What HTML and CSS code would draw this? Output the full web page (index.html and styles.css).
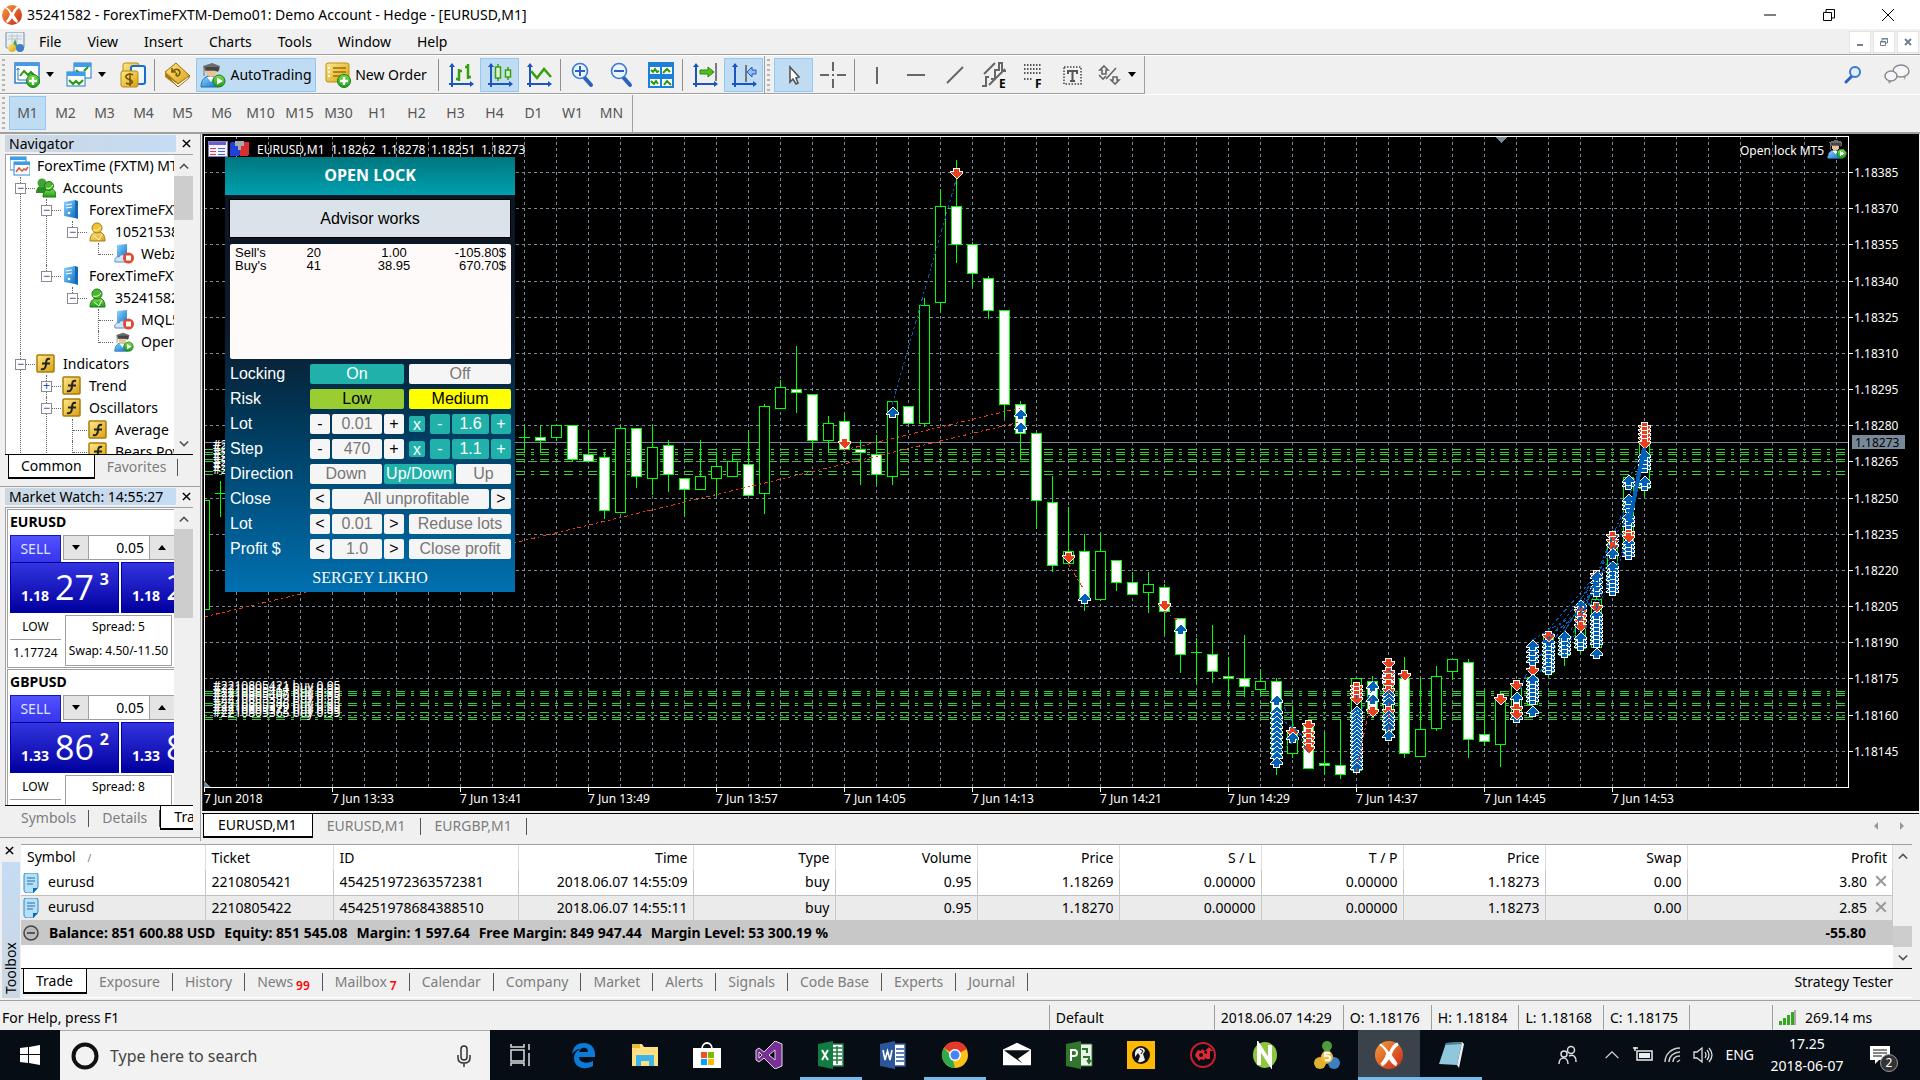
FILE: index.html
```
<!DOCTYPE html>
<html lang="en">
<head>
    <meta charset="utf-8">
    <title>35241582 - ForexTimeFXTM-Demo01: Demo Account - Hedge - [EURUSD,M1]</title>
    <link rel="stylesheet" href="styles.css">
</head>
<body>
    <!-- shared icons -->
    <svg class="defs" aria-hidden="true">
        <defs>
            <linearGradient id="gold" x1="0" y1="0" x2="1" y2="1"><stop offset="0" stop-color="#ffe98a"/><stop offset="1" stop-color="#d9a010"/></linearGradient>
            <linearGradient id="blue" x1="0" y1="0" x2="1" y2="1"><stop offset="0" stop-color="#8fd6ff"/><stop offset="1" stop-color="#1272c4"/></linearGradient>
            <linearGradient id="green" x1="0" y1="0" x2="0" y2="1"><stop offset="0" stop-color="#7ede4a"/><stop offset="1" stop-color="#1f9a1c"/></linearGradient>
            <linearGradient id="ball" x1="0" y1="0" x2="1" y2="1"><stop offset="0" stop-color="#f6a03a"/><stop offset="1" stop-color="#c8261a"/></linearGradient>
        </defs>
        <symbol id="i-x" viewBox="0 0 20 20"><circle cx="10" cy="10" r="10" fill="url(#ball)"/><path d="M4 2c2 1 4 3 6 6 2-4 3-6 6-7l1 2c-3 2-4 4-5 7 2 3 3 4 4 6l-1 2c-2-1-4-3-5-5-2 3-3 4-5 5l-1-2c2-2 3-4 4-7-1-3-3-5-5-6z" fill="#fff"/></symbol>
        <symbol id="i-terminal" viewBox="0 0 20 20"><rect x="1" y="0" width="18" height="16" rx="1" fill="#e8f0f4" stroke="#6f8ea0"/><path d="M3 4h14M3 7h14M7 2v9M12 2v9" stroke="#b9c6cc"/><path d="M6 18l4-11 3 8z" fill="#4a9a4a"/><circle cx="7" cy="16" r="4" fill="url(#gold)"/><circle cx="15" cy="16" r="4" fill="#3d7fc0"/></symbol>
        <symbol id="i-chart-new" viewBox="0 0 26 26"><rect x="1" y="1" width="24" height="20" fill="#fff" stroke="#2176c7" stroke-width="1.4"/><rect x="1" y="1" width="24" height="3" fill="#3c9de8"/><path d="M4 6v12h17M2.500 8l1.500-2 1.500 2" stroke="#2176c7" fill="none"/><path d="M6 14l4-5 4 4 3-3 4 4" stroke="#279a13" stroke-width="2" fill="none"/><circle cx="19" cy="19" r="6.500" fill="url(#green)" stroke="#178016"/><path d="M19 15v8M15 19h8" stroke="#fff" stroke-width="2.400"/></symbol>
        <symbol id="i-windows" viewBox="0 0 26 26"><rect x="8" y="1" width="17" height="15" fill="#fff" stroke="#2176c7"/><rect x="8" y="1" width="17" height="4" fill="#3c9de8"/><path d="M18 9l4-4M10 8l4 4" stroke="#279a13" stroke-width="2"/><rect x="1" y="10" width="18" height="14" fill="#fff" stroke="#2176c7"/><rect x="1" y="10" width="18" height="4" fill="#3c9de8"/><path d="M3 18l4 4 3-3 3 3 4-4" stroke="#279a13" stroke-width="2" fill="none"/></symbol>
        <symbol id="i-money" viewBox="0 0 26 26"><rect x="3" y="1" width="16" height="18" rx="2" fill="url(#gold)" stroke="#b98a12"/><rect x="11" y="4" width="14" height="18" rx="2" fill="#f0f8ff" stroke="#1a6cd0" stroke-width="2"/><rect x="1" y="9" width="17" height="16" rx="2" fill="url(#gold)" stroke="#b98a12"/><path d="M13 13q-3-2-6 0t1 4q6 2 4 4-3 2-6 0M10 11v13" fill="none" stroke="#7a5600" stroke-width="1.600"/></symbol>
        <symbol id="i-book" viewBox="0 0 26 26"><path d="M1 10L12 1l14 13-12 8z" fill="url(#gold)" stroke="#9c6d09"/><path d="M1 10v5l13 10v-4z" fill="#b98212"/><path d="M2 13l12 9 11-8v2l-11 9z" fill="#fff" stroke="#9c6d09"/><path d="M9 9c4-4 9 0 6 4-2 2-4 0-2-2M8 6v4h4" stroke="#7a5600" stroke-width="1.600" fill="none"/></symbol>
        <symbol id="i-expert" viewBox="0 0 26 26"><path d="M1 25c0-7 4-11 9-11s8 4 8 11z" fill="url(#blue)" stroke="#1b6fb0"/><path d="M7 15l4 5 3-5z" fill="#fff"/><circle cx="11" cy="10" r="5" fill="#ecc28f"/><path d="M3 4l9-3 8 3-1 5H5z" fill="#6d6d6d"/><path d="M5 5h14l-1 5-4-2H6z" fill="#444"/><path d="M4 4v10" stroke="#777"/><circle cx="19" cy="19" r="6" fill="url(#green)" stroke="#178016"/><path d="M17 15.500l6 3.500-6 3.500z" fill="#fff"/></symbol>
        <symbol id="i-order" viewBox="0 0 26 26"><rect x="1" y="1" width="23" height="19" rx="2" fill="url(#gold)" stroke="#c0900e"/><path d="M8 6h13M8 10h13M8 14h9" stroke="#9a7205" stroke-width="1.500"/><path d="M3 6h2M3 10h2M3 14h2" stroke="#fff" stroke-width="2"/><circle cx="19" cy="19" r="6.500" fill="url(#green)" stroke="#178016"/><path d="M19 15v8M15 19h8" stroke="#fff" stroke-width="2.400"/></symbol>
        <symbol id="i-axes" viewBox="0 0 26 26"><path d="M4 2v23M1 22h24" stroke="#1d55c0" stroke-width="2"/><path d="M1 5l3-4 3 4zM22 19l4 3-4 3z" fill="#1d55c0"/></symbol>
        <symbol id="i-bars" viewBox="0 0 26 26"><use href="#i-axes"/><path d="M11 7v12M8 17h3M11 9h3M20 2v15M17 5h3M20 15h3" stroke="#35a00e" stroke-width="2.500"/></symbol>
        <symbol id="i-candles" viewBox="0 0 26 26"><use href="#i-axes"/><path d="M11 2v17M21 5v13" stroke="#35a00e" stroke-width="1.500"/><rect x="8.500" y="5" width="5" height="11" fill="#dff2d4" stroke="#35a00e" stroke-width="1.500"/><rect x="18.500" y="8" width="5" height="7" fill="#dff2d4" stroke="#35a00e" stroke-width="1.500"/></symbol>
        <symbol id="i-line" viewBox="0 0 26 26"><use href="#i-axes"/><path d="M5 9l6 7 7-9 7 8" stroke="#35a00e" stroke-width="2.500" fill="none"/></symbol>
        <symbol id="i-zoomin" viewBox="0 0 26 26"><path d="M14 15l7 8" stroke="#2a62c0" stroke-width="4" stroke-linecap="round"/><circle cx="10" cy="9" r="7.500" fill="#eaf4ff" stroke="#3a78d0" stroke-width="1.600"/><path d="M10 4v10M5 9h10" stroke="#2a62c0" stroke-width="2"/></symbol>
        <symbol id="i-zoomout" viewBox="0 0 26 26"><path d="M14 15l7 8" stroke="#2a62c0" stroke-width="4" stroke-linecap="round"/><circle cx="10" cy="9" r="7.500" fill="#eaf4ff" stroke="#3a78d0" stroke-width="1.600"/><path d="M5 9h10" stroke="#2a62c0" stroke-width="2"/></symbol>
        <symbol id="i-tile" viewBox="0 0 26 26"><rect x="0" y="0" width="26" height="26" fill="#1d80d8"/><path d="M2 5h10v7H2zM14 5h10v7H14zM2 17h10v7H2zM14 17h10v7H14z" fill="#fff"/><path d="M3 8l2 2 2-3 2 3 2-1M15 11l4-4 3 3M3 19l3 3 2-3 2 3M16 23l3-4 4 4" stroke="#279a13" stroke-width="2" fill="none"/></symbol>
        <symbol id="i-scroll" viewBox="0 0 26 26"><use href="#i-axes"/><path d="M24 1v18" stroke="#555" stroke-width="1.500"/><path d="M8 8h8V5l6 5-6 5v-3H8z" fill="#58bd20" stroke="#278b0b"/></symbol>
        <symbol id="i-shift" viewBox="0 0 26 26"><use href="#i-axes"/><path d="M15 3v17" stroke="#555" stroke-width="1.500"/><path d="M25 8h-4V5l-5 5 5 5v-3h4z" fill="#8fc0f8" stroke="#1d55c0"/></symbol>
        <symbol id="i-cursor" viewBox="0 0 26 26"><path d="M9 5v15l3-3 3 5 2-1-2-5 3-1z" fill="#fff" stroke="#555" stroke-width="1.600"/></symbol>
        <symbol id="i-cross" viewBox="0 0 26 26"><path d="M13 0v9M13 17v9M0 13h9M17 13h9" stroke="#666" stroke-width="2"/><path d="M13 12v2" stroke="#666" stroke-width="2"/></symbol>
        <symbol id="i-vline" viewBox="0 0 26 26"><path d="M13 5v17" stroke="#666" stroke-width="2"/></symbol>
        <symbol id="i-hline" viewBox="0 0 26 26"><path d="M4 13h18" stroke="#666" stroke-width="2"/></symbol>
        <symbol id="i-tline" viewBox="0 0 26 26"><path d="M5 21L21 5" stroke="#666" stroke-width="2"/></symbol>
        <symbol id="i-equi" viewBox="0 0 26 26"><path d="M3 12L14 1M8 23L24 7M1 24h4v-9h3M10 17h4V8h4V1h3v8h4" stroke="#666" stroke-width="2" fill="none"/><text x="18" y="26" font-size="12" font-weight="700">E</text></symbol>
        <symbol id="i-fibo" viewBox="0 0 26 26"><path d="M4 3h18M4 7h18M4 11h18M4 17h9" stroke="#555" stroke-width="2" stroke-dasharray="1.500 1.500"/><text x="15" y="26" font-size="12" font-weight="700">F</text></symbol>
        <symbol id="i-text" viewBox="0 0 26 26"><rect x="5" y="5" width="17" height="17" fill="none" stroke="#444" stroke-width="1.500" stroke-dasharray="1.500 1.500"/><path d="M9 12V9h9v3M13.500 9v10M11 19h5" stroke="#555" stroke-width="2" fill="none"/></symbol>
        <symbol id="i-shapes" viewBox="0 0 26 26"><path d="M8 4l4 4h-2v4H6V8H4zM19 22l-4-4h2v-3h4v3h2zM10 17L20 6M3 13l4 4 3-3" stroke="#666" stroke-width="1.600" fill="none"/></symbol>
        <symbol id="i-server" viewBox="0 0 20 20"><path d="M2 2l11-2v18L2 16z" fill="url(#blue)"/><path d="M13 0l3 1v18l-3-1z" fill="#1568b4"/><path d="M4 5l6-1M4 8l6-1" stroke="#fff"/><circle cx="7" cy="13" r="1.300" fill="#fff"/></symbol>
        <symbol id="i-user" viewBox="0 0 20 20"><path d="M2 19c0-7 4-9 8-9s7 2 7 9z" fill="url(#green)" stroke="#1a7a17"/><circle cx="9" cy="6" r="5" fill="#4fb52f" stroke="#1a7a17"/><path d="M5 8c3 1 6 0 8-3M6 14l5 4 3-6" stroke="#e7ffd8" fill="none"/></symbol>
        <symbol id="i-userg" viewBox="0 0 20 20"><path d="M2 19c0-7 4-9 8-9s7 2 7 9z" fill="url(#gold)" stroke="#a97c0c"/><circle cx="9" cy="6" r="5" fill="#f0c23a" stroke="#a97c0c"/><path d="M5 8c3 1 6 0 8-3M6 14l5 4 3-6" stroke="#fff7d0" fill="none"/></symbol>
        <symbol id="i-users" viewBox="0 0 20 20"><path d="M0 15c0-6 3-7 6-7s7 2 7 7z" fill="#2c8a25"/><circle cx="6" cy="5" r="4.500" fill="#3fa335"/><path d="M7 19c0-6 3-8 7-8s6 2 6 8z" fill="url(#green)" stroke="#1a7a17"/><circle cx="13" cy="8" r="4.500" fill="#4fb52f" stroke="#1a7a17"/><path d="M10 10c3 1 5 0 7-3" stroke="#e7ffd8" fill="none"/></symbol>
        <symbol id="i-cloud" viewBox="0 0 20 20"><path d="M3 1l10-1v14H3z" fill="url(#blue)"/><path d="M1 18c-1-4 2-6 4-5 2-4 7-3 7 5z" fill="#cfe4f7" stroke="#5b8fc0"/><circle cx="14.500" cy="14" r="5.500" fill="#e0492e"/><rect x="12" y="11.500" width="5" height="5" fill="#fff"/></symbol>
        <symbol id="i-func" viewBox="0 0 20 20"><rect x="1" y="1" width="17" height="17" rx="1" fill="url(#gold)" stroke="#a97c0c" stroke-width="1.500"/><path d="M14 5c-3-1-4 1-4 5s-2 6-5 5M6 9.500h8" stroke="#222" stroke-width="2" fill="none"/></symbol>
        <symbol id="i-root" viewBox="0 0 20 20"><rect x="0" y="1" width="16" height="13" fill="#fff" stroke="#2b8ad8"/><rect x="0" y="1" width="16" height="3" fill="#3c9de8"/><rect x="4" y="6" width="16" height="13" fill="#fff" stroke="#2b8ad8"/><rect x="4" y="6" width="16" height="3" fill="#3c9de8"/><path d="M6 16l3-4 3 3 2-2 2 1 2-3" stroke="#e0502e" stroke-width="1.500" fill="none"/></symbol>
        <symbol id="i-doc" viewBox="0 0 16 20"><path d="M1 2q0-2 2-2h11q1 1 1 3v11l-5 6H3q-2-1-2-3z" fill="#b5e0fa" stroke="#2a8acb"/><path d="M4 5h8M4 8h8M4 11h6" stroke="#2a6ea5"/><path d="M10 20v-5h5z" fill="#0d69ad"/></symbol>
        <symbol id="i-up" viewBox="0 0 12 8"><path d="M1 7l5-5 5 5" fill="none" stroke="#555" stroke-width="2"/></symbol>
        <symbol id="i-down" viewBox="0 0 12 8"><path d="M1 1l5 5 5-5" fill="none" stroke="#555" stroke-width="2"/></symbol>
        <symbol id="i-close" viewBox="0 0 10 10"><path d="M1 1l8 8M9 1L1 9" stroke="currentColor" stroke-width="1.600"/></symbol>
    </svg>

    <header class="titlebar">
        <svg class="app-icon"><use href="#i-x"/></svg>
        <span>35241582 - ForexTimeFXTM-Demo01: Demo Account - Hedge - [EURUSD,M1]</span>
        <div class="window-controls">
            <button aria-label="Minimize"><svg viewBox="0 0 12 12"><path d="M0 6h12" stroke="#000"/></svg></button>
            <button aria-label="Restore"><svg viewBox="0 0 12 12"><path d="M.5 3.500h8v8h-8zM3 3V.5h8.500V9H9" fill="none" stroke="#000"/></svg></button>
            <button aria-label="Close"><svg viewBox="0 0 12 12"><path d="M0 0l12 12M12 0L0 12" stroke="#000"/></svg></button>
        </div>
    </header>

    <nav class="menubar">
        <svg class="app-icon"><use href="#i-terminal"/></svg>
        <button>File</button><button>View</button><button>Insert</button><button>Charts</button><button>Tools</button><button>Window</button><button>Help</button>
        <div class="mdi-controls">
            <button aria-label="Minimize chart"><svg viewBox="0 0 8 8"><path d="M1 7h6" stroke="#708090" stroke-width="2"/></svg></button>
            <button aria-label="Restore chart"><svg viewBox="0 0 8 8"><path d="M.5 3.500h5v4h-5zM2 3V.5h5.500V5H6M0 4h6M2 1h6" fill="none" stroke="#708090"/></svg></button>
            <button aria-label="Close chart"><svg viewBox="0 0 8 8"><path d="M1 1l6 6M7 1L1 7" stroke="#708090" stroke-width="2"/></svg></button>
        </div>
    </nav>

    <div class="toolbar">
        <div class="tool-group">
            <i class="grip"></i>
            <button class="tool drop" aria-label="New chart"><svg><use href="#i-chart-new"/></svg><i class="caret"></i></button>
            <button class="tool drop" aria-label="Profiles"><svg><use href="#i-windows"/></svg><i class="caret"></i></button>
            <button class="tool" aria-label="Symbols"><svg><use href="#i-money"/></svg></button>
            <i class="sep"></i>
            <button class="tool" aria-label="MetaEditor"><svg><use href="#i-book"/></svg></button>
            <button class="tool wide active"><svg><use href="#i-expert"/></svg>AutoTrading</button>
            <button class="tool wide"><svg><use href="#i-order"/></svg>New Order</button>
            <i class="sep"></i>
            <button class="tool" aria-label="Bar chart"><svg><use href="#i-bars"/></svg></button>
            <button class="tool active" aria-label="Candlesticks"><svg><use href="#i-candles"/></svg></button>
            <button class="tool" aria-label="Line chart"><svg><use href="#i-line"/></svg></button>
            <i class="sep"></i>
            <button class="tool" aria-label="Zoom in"><svg><use href="#i-zoomin"/></svg></button>
            <button class="tool" aria-label="Zoom out"><svg><use href="#i-zoomout"/></svg></button>
            <button class="tool" aria-label="Tile windows"><svg><use href="#i-tile"/></svg></button>
            <i class="sep"></i>
            <button class="tool" aria-label="Auto scroll"><svg><use href="#i-scroll"/></svg></button>
            <button class="tool active" aria-label="Chart shift"><svg><use href="#i-shift"/></svg></button>
        </div>
        <div class="tool-group">
            <i class="grip"></i>
            <button class="tool active" aria-label="Cursor"><svg><use href="#i-cursor"/></svg></button>
            <button class="tool" aria-label="Crosshair"><svg><use href="#i-cross"/></svg></button>
            <i class="sep"></i>
            <button class="tool" aria-label="Vertical line"><svg><use href="#i-vline"/></svg></button>
            <button class="tool" aria-label="Horizontal line"><svg><use href="#i-hline"/></svg></button>
            <button class="tool" aria-label="Trendline"><svg><use href="#i-tline"/></svg></button>
            <button class="tool" aria-label="Equidistant channel"><svg><use href="#i-equi"/></svg></button>
            <button class="tool" aria-label="Fibonacci"><svg><use href="#i-fibo"/></svg></button>
            <button class="tool" aria-label="Text"><svg><use href="#i-text"/></svg></button>
            <button class="tool drop" aria-label="Objects"><svg><use href="#i-shapes"/></svg><i class="caret"></i></button>
        </div>
        <div class="tool-right">
            <button class="tool" aria-label="Search"><svg viewBox="0 0 26 26"><path d="M12 14l-6 6" stroke="#2a62c0" stroke-width="3" stroke-linecap="round"/><circle cx="15" cy="10" r="5" fill="#dfeeff" stroke="#3a78d0" stroke-width="2"/></svg></button>
            <button class="tool" aria-label="Chat"><svg viewBox="0 0 26 26"><ellipse cx="17" cy="9" rx="8" ry="6" fill="#f4f4fa" stroke="#8a8a8a" stroke-width="1.500"/><path d="M19 14l2 4 1-5" fill="#999"/><ellipse cx="7" cy="14" rx="6" ry="5" fill="#f4f4fa" stroke="#8a8a8a" stroke-width="1.500"/><path d="M4 18l1 4 3-3" fill="#999"/></svg></button>
        </div>
    </div>

    <div class="toolbar periods">
        <div class="tool-group">
            <i class="grip"></i>
            <button class="tool active">M1</button><button class="tool">M2</button><button class="tool">M3</button><button class="tool">M4</button><button class="tool">M5</button><button class="tool">M6</button><button class="tool">M10</button><button class="tool">M15</button><button class="tool">M30</button><button class="tool">H1</button><button class="tool">H2</button><button class="tool">H3</button><button class="tool">H4</button><button class="tool">D1</button><button class="tool">W1</button><button class="tool">MN</button>
        </div>
    </div>

    <div class="workspace">
        <aside class="sidebar">
            <section class="panel navigator">
                <div class="panel-head"><h2>Navigator</h2><button aria-label="Close Navigator"><svg><use href="#i-close"/></svg></button></div>
                <div class="panel-body">
                    <div class="tree">
                        <div class="node root"><svg><use href="#i-root"/></svg>ForexTime (FXTM) MT5</div>
                        <ul>
                            <li><div class="node"><i class="exp">&minus;</i><svg><use href="#i-users"/></svg>Accounts</div>
                                <ul>
                                    <li><div class="node"><i class="exp">&minus;</i><svg><use href="#i-server"/></svg>ForexTimeFXTM</div>
                                        <ul>
                                            <li class="last"><div class="node"><i class="exp">&minus;</i><svg><use href="#i-userg"/></svg>10521538</div>
                                                <ul><li class="last"><div class="node leaf"><svg><use href="#i-cloud"/></svg>Webz</div></li></ul>
                                            </li>
                                        </ul>
                                    </li>
                                    <li class="last"><div class="node"><i class="exp">&minus;</i><svg><use href="#i-server"/></svg>ForexTimeFXTM</div>
                                        <ul>
                                            <li class="last"><div class="node"><i class="exp">&minus;</i><svg><use href="#i-user"/></svg>35241582</div>
                                                <ul>
                                                    <li><div class="node leaf"><svg><use href="#i-cloud"/></svg>MQL5</div></li>
                                                    <li class="last"><div class="node leaf"><svg><use href="#i-expert"/></svg>Open</div></li>
                                                </ul>
                                            </li>
                                        </ul>
                                    </li>
                                </ul>
                            </li>
                            <li><div class="node"><i class="exp">&minus;</i><svg><use href="#i-func"/></svg>Indicators</div>
                                <ul>
                                    <li><div class="node"><i class="exp">+</i><svg><use href="#i-func"/></svg>Trend</div></li>
                                    <li><div class="node"><i class="exp">&minus;</i><svg><use href="#i-func"/></svg>Oscillators</div>
                                        <ul>
                                            <li><div class="node leaf"><svg><use href="#i-func"/></svg>Average</div></li>
                                            <li><div class="node leaf"><svg><use href="#i-func"/></svg>Bears Power</div></li>
                                        </ul>
                                    </li>
                                </ul>
                            </li>
                        </ul>
                    </div>
                    <div class="scroll"><svg><use href="#i-up"/></svg><i class="thumb"></i><svg class="end"><use href="#i-down"/></svg></div>
                </div>
                <div class="tabs"><button class="tab current">Common</button><button class="tab">Favorites</button></div>
            </section>

            <section class="panel market">
                <div class="panel-head"><h2>Market Watch: 14:55:27</h2><button aria-label="Close Market Watch"><svg><use href="#i-close"/></svg></button></div>
                <div class="panel-body">
                    <div class="cards">
                        <article class="card">
                            <h3>EURUSD</h3>
                            <div class="deal">
                                <button class="side">SELL</button>
                                <div class="volume"><button aria-label="Less"><i class="caret"></i></button><input aria-label="EURUSD volume" value="0.05"><button aria-label="More"><i class="caret up"></i></button></div>
                            </div>
                            <div class="quotes">
                                <button class="quote">1.18 <b>27</b><sup>3</sup></button>
                                <button class="quote">1.18 <b>27</b><sup>8</sup></button>
                            </div>
                            <div class="stats">
                                <div class="low"><span>LOW</span><span>1.17724</span></div>
                                <div class="spread"><span>Spread: 5</span><span>Swap: 4.50/-11.50</span></div>
                            </div>
                        </article>
                        <article class="card">
                            <h3>GBPUSD</h3>
                            <div class="deal">
                                <button class="side">SELL</button>
                                <div class="volume"><button aria-label="Less"><i class="caret"></i></button><input aria-label="GBPUSD volume" value="0.05"><button aria-label="More"><i class="caret up"></i></button></div>
                            </div>
                            <div class="quotes">
                                <button class="quote">1.33 <b>86</b><sup>2</sup></button>
                                <button class="quote">1.33 <b>87</b><sup>0</sup></button>
                            </div>
                            <div class="stats">
                                <div class="low"><span>LOW</span><span></span></div>
                                <div class="spread"><span>Spread: 8</span><span></span></div>
                            </div>
                        </article>
                    </div>
                    <div class="scroll"><svg><use href="#i-up"/></svg><i class="thumb"></i></div>
                </div>
                <div class="tabs"><button class="tab">Symbols</button><button class="tab">Details</button><button class="tab current">Trading</button></div>
            </section>
        </aside>

        <main class="charts">
            <div class="chart">
                <svg id="plot" role="img" aria-label="EURUSD M1 chart"></svg>
                <form class="advisor">
                    <h1>OPEN LOCK</h1>
                    <button type="button" class="state">Advisor works</button>
                    <table class="positions">
                        <tr><td>Sell's</td><td>20</td><td>1.00</td><td>-105.80$</td></tr>
                        <tr><td>Buy's</td><td>41</td><td>38.95</td><td>670.70$</td></tr>
                    </table>
                    <div class="settings">
                        <span class="label">Locking</span><button type="button" class="c1-3 on">On</button><button type="button" class="c4-7">Off</button>
                        <span class="label">Risk</span><button type="button" class="c1-3 lime">Low</button><button type="button" class="c4-7 yellow">Medium</button>
                        <label for="lot">Lot</label><button type="button" class="dark">-</button><input id="lot" value="0.01"><button type="button" class="dark">+</button><button type="button" class="on x">x</button><button type="button" class="on">-</button><input class="on" aria-label="Lot factor" value="1.6"><button type="button" class="on">+</button>
                        <label for="step">Step</label><button type="button" class="dark">-</button><input id="step" value="470"><button type="button" class="dark">+</button><button type="button" class="on x">x</button><button type="button" class="on">-</button><input class="on" aria-label="Step factor" value="1.1"><button type="button" class="on">+</button>
                        <span class="label">Direction</span><div class="direction"><button type="button">Down</button><button type="button" class="on">Up/Down</button><button type="button">Up</button></div>
                        <span class="label">Close</span><button type="button" class="dark">&lt;</button><button type="button" class="c2-6">All unprofitable</button><button type="button" class="dark">&gt;</button>
                        <label for="reduce">Lot</label><button type="button" class="dark">&lt;</button><input id="reduce" value="0.01"><button type="button" class="dark">&gt;</button><button type="button" class="c4-7">Reduse lots</button>
                        <label for="profit">Profit $</label><button type="button" class="dark">&lt;</button><input id="profit" value="1.0"><button type="button" class="dark">&gt;</button><button type="button" class="c4-7">Close profit</button>
                    </div>
                    <div class="author">SERGEY LIKHO</div>
                </form>
            </div>
            <div class="tabs chart-tabs"><button class="tab current">EURUSD,M1</button><button class="tab">EURUSD,M1</button><button class="tab">EURGBP,M1</button><div class="tab-scroll"><i class="left"></i><i class="right"></i></div></div>
        </main>
    </div>

    <section class="toolbox">
        <div class="toolbox-side"><button aria-label="Close Toolbox"><svg><use href="#i-close"/></svg></button><span>Toolbox</span></div>
        <div class="toolbox-main">
            <div class="trade">
                <div class="trade-list">
                    <table>
                        <colgroup><col class="w-symbol"><col class="w-ticket"><col class="w-id"><col class="w-time"><col class="w-num"><col class="w-num"><col class="w-num"><col class="w-num"><col class="w-num"><col class="w-num"><col class="w-num"><col></colgroup>
                        <thead><tr><th>Symbol<small>/</small></th><th>Ticket</th><th>ID</th><th>Time</th><th>Type</th><th>Volume</th><th>Price</th><th>S / L</th><th>T / P</th><th>Price</th><th>Swap</th><th>Profit</th></tr></thead>
                        <tbody>
                            <tr><td><svg><use href="#i-doc"/></svg>eurusd</td><td>2210805421</td><td>454251972363572381</td><td>2018.06.07 14:55:09</td><td>buy</td><td>0.95</td><td>1.18269</td><td>0.00000</td><td>0.00000</td><td>1.18273</td><td>0.00</td><td>3.80<button aria-label="Close position"><svg><use href="#i-close"/></svg></button></td></tr>
                            <tr><td><svg><use href="#i-doc"/></svg>eurusd</td><td>2210805422</td><td>454251978684388510</td><td>2018.06.07 14:55:11</td><td>buy</td><td>0.95</td><td>1.18270</td><td>0.00000</td><td>0.00000</td><td>1.18273</td><td>0.00</td><td>2.85<button aria-label="Close position"><svg><use href="#i-close"/></svg></button></td></tr>
                        </tbody>
                    </table>
                    <div class="balance"><svg viewBox="0 0 16 16"><circle cx="8" cy="8" r="7" fill="#bbb" stroke="#444" stroke-width="1.500"/><path d="M4 8h8" stroke="#333" stroke-width="1.500"/></svg><ul><li>Balance: 851 600.88 USD</li><li>Equity: 851 545.08</li><li>Margin: 1 597.64</li><li>Free Margin: 849 947.44</li><li>Margin Level: 53 300.19 %</li></ul><span class="total">-55.80</span></div>
                </div>
                <div class="scroll"><svg><use href="#i-up"/></svg><i class="thumb"></i><svg><use href="#i-down"/></svg></div>
            </div>
            <div class="tabs"><button class="tab current">Trade</button><button class="tab">Exposure</button><button class="tab">History</button><button class="tab">News<sub>99</sub></button><button class="tab">Mailbox<sub>7</sub></button><button class="tab">Calendar</button><button class="tab">Company</button><button class="tab">Market</button><button class="tab">Alerts</button><button class="tab">Signals</button><button class="tab">Code Base</button><button class="tab">Experts</button><button class="tab">Journal</button><a href="#" class="tester">Strategy Tester</a></div>
        </div>
    </section>

    <footer class="statusbar">
        <span class="help">For Help, press F1</span><span class="profile">Default</span><span>2018.06.07 14:29</span><span>O: 1.18176</span><span>H: 1.18184</span><span>L: 1.18168</span><span>C: 1.18175</span><span class="traffic"></span>
        <span class="ping"><svg viewBox="0 0 18 16"><path d="M0 11h3v4H0zM4 8h3v7H4zM8 5h3v10H8zM12 2h3v13h-3z" fill="#35a822"/><path d="M16 0v15" stroke="#aaa" stroke-width="2"/></svg>269.14 ms</span>
    </footer>

    <div class="taskbar">
        <button class="start" aria-label="Start"><svg viewBox="0 0 20 20"><path d="M0 3l8-1v7H0zM9 2l11-2v9H9zM0 10h8v8l-8-1zM9 10h11v10L9 18z" fill="#fff"/></svg></button>
        <label class="search"><svg viewBox="0 0 28 28"><circle cx="14" cy="14" r="11.500" fill="none" stroke="#111" stroke-width="4"/></svg><input placeholder="Type here to search" aria-label="Type here to search"><svg class="mic" viewBox="0 0 16 22"><path d="M5 4q0-3 3-3t3 3v8q0 3-3 3t-3-3zM2 10v3q0 5 6 5t6-5v-3M8 18v4" fill="none" stroke="#333" stroke-width="1.500"/></svg></label>
        <div class="apps">
            <button aria-label="Task view"><svg viewBox="0 0 28 28"><path d="M4 9h13v11H4zM4 3v3h13V3M4 25v-3h13v3M22 3v6M22 12v13" fill="none" stroke="#ddd" stroke-width="1.500"/></svg></button>
            <button aria-label="Edge"><svg viewBox="0 0 28 28"><path d="M3 13C4 5 9 2 15 2c7 0 11 5 11 11v3H10c0 6 8 7 14 4v5c-10 5-19 1-19-8 0-4 2-7 6-9-3 0-6 2-8 5zM10 11h9c0-6-8-5-9 0z" fill="#0a7bd8"/></svg></button>
            <button aria-label="Explorer"><svg viewBox="0 0 28 28"><path d="M1 3h10l2 3h14v19H1z" fill="#ffdf80"/><path d="M1 3h8v4H1z" fill="#e9b93c"/><path d="M5 25V14h18v11h-5v-5h-8v5z" fill="#3db4ec"/></svg></button>
            <button aria-label="Store"><svg viewBox="0 0 28 28"><path d="M9 8c0-8 10-8 10 0" fill="none" stroke="#fff" stroke-width="1.800"/><path d="M0 7h28v20H0z" fill="#fff"/><path d="M8 11h6v6H8z" fill="#f25022"/><path d="M15 11h6v6h-6z" fill="#7fba00"/><path d="M8 18h6v6H8z" fill="#00a4ef"/><path d="M15 18h6v6h-6z" fill="#ffb900"/></svg></button>
            <button aria-label="Visual Studio"><svg viewBox="0 0 28 28"><path d="M20 0l7 3v22l-7 3L9 17l-5 4-3-2V9l3-2 5 4zM20 9l-6 5 6 5zM4 11v6l3-3z" fill="#7a2f95" stroke="#e6d8ee" fill-rule="evenodd"/></svg></button>
            <button class="open" aria-label="Excel"><svg viewBox="0 0 28 28"><path d="M14 3h12v22H14z" fill="#fff" stroke="#1f7a45" stroke-width="1.500"/><path d="M16 7h9M16 11h9M16 15h9M16 19h9M20 5v18" stroke="#1f7a45" stroke-width="1.500"/><path d="M1 3l15-3v28L1 25z" fill="#107c41"/><path d="M5 9l6 10M11 9L5 19" stroke="#fff" stroke-width="2"/></svg></button>
            <button aria-label="Word"><svg viewBox="0 0 28 28"><path d="M14 3h12v22H14z" fill="#fff" stroke="#2b579a" stroke-width="1.500"/><path d="M17 8h8M17 12h8M17 16h8M17 20h8" stroke="#2b579a" stroke-width="1.500"/><path d="M1 3l15-3v28L1 25z" fill="#2b579a"/><path d="M4 9l2 10 2.500-9L11 19l2-10" stroke="#fff" stroke-width="1.600" fill="none"/></svg></button>
            <button class="open" aria-label="Chrome"><svg viewBox="0 0 28 28"><circle cx="14" cy="14" r="13" fill="#fbc116"/><path d="M14 14L3 7a13 13 0 0 1 23 1z" fill="#e23b2e"/><path d="M3 7l8 9 3 11A13 13 0 0 1 3 7z" fill="#2da94f"/><circle cx="14" cy="14" r="6" fill="#fff"/><circle cx="14" cy="14" r="4.500" fill="#4285f4"/></svg></button>
            <button aria-label="Mail"><svg viewBox="0 0 30 28"><path d="M0 8l15-7 15 7v17H0z" fill="#fff"/><path d="M1 9h28L16 18l5 5-9-6z" fill="#0a0f14"/></svg></button>
            <button aria-label="Project"><svg viewBox="0 0 28 28"><path d="M14 3h13v22H14z" fill="#e9f3e6" stroke="#31752f"/><path d="M17 8h5v4M18 16h6v5M22 19l2 3 2-3" stroke="#31752f" stroke-width="2" fill="none"/><path d="M1 3l15-3v28L1 25z" fill="#31752f"/><path d="M6 20V9h3q3 0 3 3t-3 3H6" fill="none" stroke="#fff" stroke-width="2"/></svg></button>
            <button aria-label="Poker"><svg viewBox="0 0 28 28"><path d="M0 0h28v28H0z" fill="#ffb900"/><circle cx="14" cy="14" r="9" fill="#111"/><path d="M8 12c1-6 9-7 10-2l-2 3 2 6c-3 3-7 2-7 2l2-6-2-3-3 4z" fill="#eee"/><path d="M13 8l3 2-2 3" stroke="#111" fill="none"/></svg></button>
            <button aria-label="Recorder"><svg viewBox="0 0 28 28"><circle cx="14" cy="14" r="12" fill="none" stroke="#c8202a" stroke-width="2"/><path d="M7 12l2-3 3 1 1-2 3 2-1 2 3 1v-3h-2l4-4 4 4h-3v8h-4v-2l-2 3-3-1-2 2-2-3-2-2z" fill="#e02a32"/><circle cx="12" cy="14" r="2" fill="#111"/></svg></button>
            <button aria-label="Navigator app"><svg viewBox="0 0 28 28"><ellipse cx="14" cy="14" rx="12" ry="13" fill="#8dc63f"/><path d="M8 24V5l11 17V4" fill="none" stroke="#fff" stroke-width="4"/></svg></button>
            <button aria-label="MetaTrader 5"><svg viewBox="0 0 28 28"><circle cx="14" cy="5" r="5" fill="#4b9c3a"/><path d="M14 4l10 19H4z" fill="#5b9d46"/><circle cx="7" cy="22" r="6" fill="#e0b02e"/><circle cx="21" cy="22" r="6" fill="#3d7fc0"/><circle cx="14" cy="16" r="6" fill="#f3b93b"/><path d="M17 12h-5v3q5-1 5 2t-5 2" stroke="#fff" stroke-width="2" fill="none"/></svg></button>
            <button class="open focused" aria-label="ForexTime"><svg><use href="#i-x"/></svg></button>
            <button class="open" aria-label="Notepad"><svg viewBox="0 0 28 28"><path d="M9 2l16-1-5 23L2 23z" fill="#8fc8dc"/><path d="M25 1l2 2-5 24-2-3z" fill="#eee"/><path d="M9 3l15-1" stroke="#4a7f92" stroke-width="2"/></svg></button>
        </div>
        <div class="tray">
            <svg viewBox="0 0 20 20"><circle cx="13" cy="5" r="3.500" fill="none" stroke="#ddd" stroke-width="1.500"/><circle cx="6" cy="9" r="3" fill="none" stroke="#ddd" stroke-width="1.500"/><path d="M1 19c0-8 9-8 9 0M11 11c4-2 7 0 7 6" fill="none" stroke="#ddd" stroke-width="1.500"/></svg>
            <svg class="chev" viewBox="0 0 20 20"><path d="M2 14l8-8 8 8" fill="none" stroke="#ddd" stroke-width="1.500"/></svg>
            <svg viewBox="0 0 20 20"><path d="M4 6h15v9H4zM2 2v4M0 3h5" fill="none" stroke="#eee" stroke-width="1.500"/><path d="M6 8h11v5H6z" fill="#eee"/></svg>
            <svg viewBox="0 0 20 20"><path d="M2 17C2 9 9 3 17 3M6 17c0-6 5-10 11-10M10 17c0-4 3-6 7-6M14 17l3-2" fill="none" stroke="#ccc" stroke-width="1.500"/></svg>
            <svg viewBox="0 0 20 20"><path d="M1 7h3l5-4v14l-5-4H1zM12 7q2 3 0 6M14 5q4 5 0 10M16 3q6 7 0 14" fill="none" stroke="#ddd" stroke-width="1.300"/></svg>
            <span class="lang">ENG</span>
            <div class="clock"><span>17.25</span><span>2018-06-07</span></div>
            <button class="notes" aria-label="Notifications"><svg viewBox="0 0 20 20"><path d="M0 1h20v14H9l-4 4v-4H0z" fill="#fff"/><path d="M3 5h14M3 8h14M3 11h9" stroke="#111"/></svg><span>2</span></button>
        </div>
    </div>

    <script src="chart.js"></script>
</body>
</html>
```
FILE: styles.css
```
* {
    box-sizing: border-box;
}
body {
    margin: 0;
    height: 100vh;
    display: flex;
    flex-direction: column;
    overflow: hidden;
    background: #f0f0f0;
    color: #000;
    font: 14px/20px "Noto Sans", "Open Sans", sans-serif;
}
button, input {
    font: inherit;
    color: inherit;
    margin: 0;
    padding: 0;
    border: 0;
    background: none;
    border-radius: 0;
}
button {
    white-space: nowrap;
}
svg {
    flex: none;
    display: block;
}
.defs {
    position: absolute;
    width: 0;
    height: 0;
}
h1, h2, h3 {
    margin: 0;
    font-weight: normal;
    font-size: 14px;
}

/* title and menu */
.titlebar {
    flex: none;
    display: flex;
    align-items: center;
    height: 29px;
    padding: 0 3px 0 2px;
    gap: 5px;
    background: #fff;
}
.app-icon {
    width: 20px;
    height: 20px;
}
.window-controls {
    display: flex;
    margin-left: auto;
}
.window-controls button {
    width: 59px;
    height: 29px;
    display: grid;
    place-items: center;
}
.window-controls svg {
    width: 12px;
    height: 12px;
}
.menubar {
    flex: none;
    display: flex;
    align-items: center;
    height: 26px;
    padding-left: 5px;
    border-bottom: 1px solid #a0a0a0;
}
.menubar > button {
    padding: 0 13px;
}
.menubar > .app-icon {
    margin-right: 1px;
}
.mdi-controls {
    display: flex;
    gap: 2px;
    margin-left: auto;
    padding-right: 1px;
}
.mdi-controls button {
    width: 22px;
    height: 22px;
    display: grid;
    place-items: center;
    background: #fff;
    border: 1px solid #e3e3e3;
}
.mdi-controls svg {
    width: 8px;
    height: 8px;
}

/* toolbars */
.toolbar {
    flex: none;
    display: flex;
    height: 39px;
    border-top: 1px solid #fff;
}
.tool-group {
    display: flex;
    align-items: center;
    border-right: 1px solid #a0a0a0;
    border-bottom: 1px solid #a0a0a0;
    padding: 0 1px 0 2px;
}
.periods {
    height: 38px;
}
.periods .tool-group {
    border-bottom: 0;
    padding-bottom: 2px;
}
.grip {
    width: 3px;
    height: 32px;
    margin-right: 4px;
    background: repeating-linear-gradient(#b4b4b4 0 2px, #f0f0f0 2px 5px);
}
.tool {
    display: flex;
    align-items: center;
    justify-content: center;
    width: 39px;
    height: 34px;
    border: 1px solid transparent;
}
.tool svg {
    width: 26px;
    height: 26px;
}
.tool.drop {
    width: 52px;
    gap: 6px;
    justify-content: flex-start;
    padding-left: 4px;
}
.tool.wide {
    width: 120px;
    gap: 4px;
}
.tool.active {
    background: #c0dcf3;
    border-color: #90c8f6;
}
.periods .tool {
    color: #555;
}
.periods .active {
    width: 37px;
}
.sep {
    width: 1px;
    height: 32px;
    margin: 0 2px;
    background: #909090;
}
.tool-right {
    display: flex;
    align-items: center;
    gap: 5px;
    margin-left: auto;
    padding-right: 4px;
}
.caret {
    border: 4px solid transparent;
    border-top: 5px solid #000;
    border-bottom: 0;
}
.caret.up {
    border-top: 0;
    border-bottom: 5px solid #000;
}

/* left side */
.workspace {
    flex: 1;
    min-height: 0;
    display: flex;
    border-top: 2px solid #a0a0a0;
}
.sidebar {
    width: 201px;
    flex: none;
    display: flex;
    flex-direction: column;
    border-right: 1px solid #a0a0a0;
    padding-bottom: 3px;
}
.panel {
    display: flex;
    flex-direction: column;
    min-height: 0;
    padding: 1px 7px 7px 5px;
    border-bottom: 1px solid #a0a0a0;
}
.navigator {
    flex: 0 0 353px;
}
.market {
    flex: 1;
}
.panel-head {
    flex: none;
    display: flex;
    align-items: center;
    height: 17px;
    gap: 6px;
    margin-bottom: 2px;
}
.panel-head h2 {
    width: 171px;
    padding-left: 4px;
    line-height: 17px;
    background: linear-gradient(90deg, #ccd7e2, #c4dcf4);
}
.panel-head svg, .toolbox-side svg {
    width: 9px;
    height: 9px;
}
.panel-body {
    flex: 1;
    min-height: 0;
    display: flex;
    border: 1px solid #a0a0a0;
    border-width: 1px 0 0 1px;
    background: #fff;
}
.scroll {
    flex: none;
    width: 19px;
    margin-left: auto;
    display: flex;
    flex-direction: column;
    align-items: center;
    background: #f0f0f0;
}
.scroll svg {
    width: 10px;
    height: 8px;
    margin: 7px 0 6px;
}
.scroll .end {
    margin-top: auto;
}
.thumb {
    width: 19px;
    height: 44px;
    background: #cdcdcd;
}
.market .thumb {
    height: 89px;
}
.tree, .cards {
    flex: 1;
    min-width: 0;
    overflow: hidden;
    white-space: nowrap;
}
.tree ul {
    list-style: none;
    margin: 0;
    padding: 0 0 0 26px;
}
.tree > ul {
    padding-left: 8px;
}
.tree li {
    position: relative;
}
.tree li::before {
    content: "";
    position: absolute;
    left: 6px;
    top: 0;
    height: 100%;
    border-left: 1px dotted #666;
}
.tree .last::before {
    height: 12px;
}
.node {
    position: relative;
    display: flex;
    align-items: center;
    height: 22px;
    gap: 7px;
    padding-left: 22px;
}
.node svg {
    width: 20px;
    height: 20px;
}
.node::before {
    content: "";
    position: absolute;
    left: 7px;
    top: 11px;
    width: 14px;
    border-top: 1px dotted #666;
}
.node.root {
    padding-left: 4px;
}
.node.root::before {
    display: none;
}
.exp {
    position: absolute;
    left: 1px;
    top: 6px;
    width: 11px;
    height: 11px;
    border: 1px solid #8c8c8c;
    background: #fff;
    color: #2b4fa0;
    font: 12px/8px "Liberation Sans", sans-serif;
    text-align: center;
}

/* tabs */
.tabs {
    flex: none;
    display: flex;
    height: 25px;
    border-top: 1px solid #000;
    white-space: nowrap;
    overflow: hidden;
}
.tab {
    position: relative;
    flex: none;
    padding: 0 12px;
    color: #7d7d7d;
}
.tab::after {
    content: "";
    position: absolute;
    right: 0;
    top: 4px;
    bottom: 3px;
    border-right: 1px solid #555;
}
.tab.current {
    margin-top: -1px;
    color: #000;
    background: #fff;
    border: 1px solid #000;
    border-top-color: #fff;
    border-bottom-width: 2px;
}
.tab.current::after {
    display: none;
}
.panel .tabs {
    padding-left: 3px;
}
.market .tab {
    padding: 0 13px;
}

/* market watch */
.card {
    width: 200px;
    height: 159px;
    margin: 1px 0 1px 1px;
    padding: 3px 3px 3px 2px;
    border: 1px solid #a0a0a0;
}
.card h3 {
    font-weight: 700;
    line-height: 18px;
}
.deal {
    display: flex;
    height: 27px;
    margin-top: 4px;
}
.side {
    width: 51px;
    color: #dfe4ff;
    background: linear-gradient(#5252ff, #3535ea);
    border: 1px solid #1616b0;
    border-bottom: 0;
}
.volume {
    display: flex;
    height: 25px;
    margin-left: 2px;
    border: 1px solid #a0a0a0;
}
.volume button {
    width: 24px;
    display: grid;
    place-items: center;
    background: #e4e4e4;
}
.volume input {
    width: 62px;
    padding-right: 5px;
    text-align: right;
    background: #fff;
    border: 1px solid #a0a0a0;
    border-width: 0 1px;
}
.quotes {
    display: flex;
    gap: 2px;
}
.quote {
    flex: none;
    width: 109px;
    height: 51px;
    display: flex;
    align-items: flex-end;
    gap: 6px;
    padding: 0 0 6px 10px;
    color: #fff;
    font-weight: 700;
    background: linear-gradient(#3434e0, #0000a0);
    border: 1px solid #0000a8;
}
.quote b {
    font-family: "Open Sans", sans-serif;
    font-size: 34px;
    line-height: 38px;
    font-weight: 400;
}
.quote sup {
    align-self: flex-start;
    font-size: 16px;
    line-height: 32px;
}
.stats {
    display: flex;
    gap: 4px;
    margin-top: 1px;
    font-size: 12px;
    text-align: center;
}
.low {
    width: 51px;
}
.stats span {
    display: block;
    height: 26px;
    line-height: 26px;
}
.low span:first-child {
    border-bottom: 1px solid #a0a0a0;
}
.spread {
    width: 107px;
    margin-top: 1px;
    border: 1px solid #a0a0a0;
}
.spread span {
    height: 24px;
    line-height: 22px;
}

/* chart */
.charts {
    flex: 1;
    min-width: 0;
    display: flex;
    flex-direction: column;
    padding: 0 1px 3px;
}
.chart {
    position: relative;
    flex: 1;
    min-height: 0;
    background: #000;
    border-left: 1px solid #444;
    overflow: hidden;
}
#plot {
    width: 100%;
    height: 100%;
}
#plot text {
    font: 12px "Noto Sans", sans-serif;
    fill: #fff;
}
#plot .current-price {
    fill: #000;
}
.chart-tabs {
    height: 25px;
    margin-top: 2px;
    padding-left: 1px;
}
.chart-tabs .tab {
    padding: 0 15px 0 14px;
}
.tab-scroll {
    display: flex;
    gap: 22px;
    align-items: center;
    margin-left: auto;
    padding-right: 15px;
}
.left, .right {
    border: 4px solid transparent;
}
.left {
    border-right-color: #999;
    border-left: 0;
}
.right {
    border-left-color: #999;
    border-right: 0;
}

/* advisor panel floats over the chart */
.advisor {
    position: absolute;
    left: 22px;
    top: 23px;
    width: 290px;
    padding-bottom: 2px;
    color: #fff;
    font: 16px/20px "Liberation Sans", Arial, sans-serif;
    background: linear-gradient(#0d1420, #0b1a2c 40%, #003a5c 62%, #0070b0);
}
.advisor h1 {
    height: 38px;
    font: 700 16px/37px "Open Sans", sans-serif;
    text-align: center;
    background: linear-gradient(#00767e, #00a0b0);
}
.state {
    display: block;
    width: 282px;
    height: 39px;
    margin: 4px 4px 6px;
    color: #000;
    background: #dbe3ea;
    border: 1px solid #000;
}
.positions {
    display: block;
    width: 281px;
    height: 115px;
    margin: 0 4px 0 5px;
    padding: 2px 5px;
    color: #000;
    font-size: 13px;
    line-height: 13px;
    background: #fffafa;
    border-spacing: 0;
    border-radius: 2px;
}
.positions td {
    padding: 0;
    width: 60px;
    text-align: center;
}
.positions td:first-child {
    text-align: left;
}
.positions td:nth-child(2) {
    width: 40px;
}
.positions td:nth-child(3) {
    width: 124px;
}
.positions td:last-child {
    width: 47px;
    text-align: right;
}
.settings {
    display: grid;
    grid-template-columns: 78px 20px 50px 20px 22px 20px 37px 20px;
    column-gap: 2px;
    row-gap: 5px;
    padding: 5px 3px 0 5px;
}
.settings button, .settings input {
    width: 100%;
    min-width: 0;
    height: 20px;
    line-height: 20px;
    color: #777;
    background: #f5f5f5;
    text-align: center;
    border-radius: 2px;
}
.settings .dark {
    color: #000;
}
.settings .on {
    color: #fff;
    background: #20b2aa;
}
.settings .x {
    height: 16px;
    line-height: 15px;
    align-self: center;
    margin-left: 3px;
    width: 16px;
}
.settings .lime {
    color: #000;
    background: #9acd32;
}
.settings .yellow {
    color: #000;
    background: #ff0;
}
.c1-3 {
    grid-column: span 3;
}
.c4-7 {
    grid-column: span 4;
}
.settings .c4-7 {
    width: auto;
    margin-left: 3px;
}
.settings .c2-6 {
    grid-column: span 5;
    padding-left: 12px;
}
.direction {
    grid-column: span 7;
    display: grid;
    grid-template-columns: 72px 70px 1fr;
    gap: 2px;
}
.author {
    padding-top: 7px;
    text-align: center;
    font: 16px/24px "Liberation Serif", serif;
}

/* toolbox */
.toolbox {
    flex: none;
    display: flex;
    height: 159px;
    padding: 3px 8px 2px 0;
}
.toolbox-side {
    width: 18px;
    margin: 0 1px 0 2px;
    display: flex;
    flex-direction: column;
    gap: 6px;
}
.toolbox-side button {
    display: grid;
    place-items: center;
    height: 12px;
    padding-right: 3px;
}
.toolbox-side span {
    flex: 1;
    writing-mode: vertical-rl;
    transform: rotate(180deg);
    line-height: 18px;
    padding-top: 4px;
    background: linear-gradient(#ccd7e2, #c4dcf4);
}
.toolbox-main {
    flex: 1;
    min-width: 0;
    display: flex;
    flex-direction: column;
    border-bottom: 1px solid #fff;
}
.trade {
    flex: 1;
    display: flex;
    background: #fff;
    border-top: 1px solid #a0a0a0;
}
.trade-list {
    flex: 1;
}
.trade table {
    width: 100%;
    table-layout: fixed;
    border-collapse: collapse;
}
.trade th, .trade td {
    height: 25px;
    padding: 0 5px 0 6px;
    border-right: 1px solid #ddd;
    font-weight: normal;
    text-align: right;
    white-space: nowrap;
}
.trade td {
    border-right-color: #c8c8c8;
}
.trade tbody tr + tr {
    background: #ebebeb;
    border-top: 1px solid #c0c0c0;
}
.trade th:nth-child(-n+3), .trade td:nth-child(-n+3) {
    text-align: left;
}
.trade td:first-child {
    padding-left: 2px;
}
.trade small {
    margin-left: 12px;
    color: #777;
    font-size: 10px;
}
.trade td svg {
    display: inline-block;
    width: 16px;
    height: 20px;
    margin-right: 9px;
    vertical-align: middle;
}
.trade td button {
    margin-left: 8px;
    color: #999;
}
.trade td button svg {
    display: block;
    width: 12px;
    height: 12px;
    margin: 0;
}
.w-symbol { width: 184px; }
.w-ticket { width: 128px; }
.w-id { width: 185px; }
.w-time { width: 175px; }
.w-num { width: 142px; }
.balance {
    display: flex;
    align-items: center;
    height: 25px;
    gap: 10px;
    padding: 0 27px 0 2px;
    font-weight: 700;
    background: #c8c8c8;
}
.balance svg {
    width: 16px;
    height: 16px;
}
.balance ul {
    display: flex;
    gap: 9px;
    margin: 0;
    padding: 0;
    list-style: none;
}
.total {
    margin-left: auto;
}
.trade .thumb {
    height: 21px;
    margin-top: auto;
}
.toolbox .tabs {
    height: 29px;
    padding: 0 19px 0 2px;
}
.toolbox .tab {
    height: 26px;
    padding: 0 13px 0 12px;
}
.toolbox .tab:not(.current) {
    line-height: 24px;
    height: 25px;
}
.tab sub {
    color: #f00;
    font-size: 12px;
    font-weight: 600;
    margin-left: 3px;
    line-height: 0;
}
.tester {
    margin-left: auto;
    line-height: 26px;
    color: #000;
    text-decoration: none;
}

/* status bar */
.statusbar {
    flex: none;
    display: flex;
    height: 30px;
    padding-top: 4px;
    border-top: 1px solid #a0a0a0;
    line-height: 26px;
}
.statusbar span {
    padding: 0 11px 0 6px;
    border-left: 1px solid #a0a0a0;
    white-space: nowrap;
}
.statusbar .help {
    flex: 1;
    padding-left: 2px;
    border: 0;
}
.statusbar .profile {
    width: 165px;
}
.statusbar .traffic {
    width: 83px;
}
.statusbar .ping {
    display: flex;
    align-items: center;
    gap: 8px;
    width: 148px;
}
.ping svg {
    width: 18px;
    height: 16px;
}

/* taskbar */
.taskbar {
    flex: none;
    display: flex;
    height: 50px;
    color: #fff;
    background: #060d15;
}
.start {
    width: 60px;
    display: grid;
    place-items: center;
}
.start svg {
    width: 20px;
    height: 20px;
}
.search {
    width: 430px;
    display: flex;
    align-items: center;
    padding: 0 18px 0 11px;
    background: #f2f2f2;
    border-top: 1px solid #aaa;
    color: #444;
}
.search svg {
    width: 28px;
    height: 28px;
}
.search input {
    flex: 1;
    min-width: 0;
    padding-left: 11px;
    font-size: 16px;
    outline: 0;
}
.search input::placeholder {
    color: #444;
}
.search .mic {
    width: 16px;
    height: 22px;
}
.apps {
    display: flex;
}
.apps button {
    width: 62px;
    height: 50px;
    display: grid;
    place-items: center;
}
.apps svg {
    width: 28px;
    height: 28px;
}
.apps .open {
    border-bottom: 3px solid #76b9ed;
    padding-top: 3px;
}
.apps .focused {
    background: #3a424b;
}
.tray {
    display: flex;
    align-items: center;
    gap: 10px;
    margin-left: auto;
    padding-right: 30px;
}
.tray svg {
    width: 20px;
    height: 20px;
}
.tray .chev {
    width: 16px;
    height: 16px;
    margin: 0 3px 0 16px;
}
.lang {
    margin-left: 2px;
}
.clock {
    display: flex;
    flex-direction: column;
    gap: 2px;
    width: 86px;
    text-align: center;
}
.notes {
    position: relative;
    margin-left: 10px;
}
.notes span {
    position: absolute;
    left: 10px;
    top: 9px;
    width: 18px;
    height: 18px;
    border: 1px solid #999;
    border-radius: 50%;
    background: #333;
    font-size: 12px;
    line-height: 16px;
}
```
FILE: chart.js
```
var NS = "http://www.w3.org/2000/svg";
var plot = document.getElementById("plot");
var LEFT = 204, TOP = 136, RIGHT = 1848, BOTTOM = 787;

// window coordinates are used below, so move everything to the chart corner
var root = add("g", { transform: "translate(-203,-134)", "shape-rendering": "crispEdges" }, plot);

function add(tag, attrs, parent) {
    var el = document.createElementNS(NS, tag);
    for (var key in attrs) el.setAttribute(key, attrs[key]);
    (parent || root).appendChild(el);
    return el;
}

function line(x1, y1, x2, y2, color, dash) {
    var attrs = { d: "M" + x1 + " " + y1 + "L" + x2 + " " + y2, stroke: color, fill: "none" };
    if (dash) attrs["stroke-dasharray"] = dash;
    return add("path", attrs);
}

function label(x, y, text, cls) {
    var el = add("text", { x: x, y: y });
    if (cls) el.setAttribute("class", cls);
    el.textContent = text;
}

// grid
var GRID = "#778899";
for (var x = LEFT + 32; x < RIGHT; x += 32) line(x + 0.5, TOP, x + 0.5, BOTTOM, GRID, "3 3");
var levels = [172, 208, 244, 281, 317, 353, 389, 425, 461, 498, 534, 570, 606, 642, 678, 715, 751];
levels.forEach(function (y, i) {
    line(LEFT, y + 0.5, RIGHT, y + 0.5, GRID, "3 3");
    line(RIGHT, y + 0.5, RIGHT + 5, y + 0.5, "#fff");
    label(1854, y + 5, (1.18385 - i * 0.00015).toFixed(5));
});

// pending and stop levels
[449, 452, 454, 459, 461, 471, 474, 691, 693, 695, 703, 705, 712, 717, 719].forEach(function (y) {
    line(LEFT, y + 0.5, RIGHT, y + 0.5, "#32cd32", "9 6 3 6");
});
line(LEFT, 442.5, RIGHT, 442.5, GRID);

// candles: x, high, body top, body bottom, low, filled
var candles = [
    [204, 500, 500, 609, 609, 0], [220, 481, 493, 493, 516, 0],
    [524, 425, 437, 437, 452, 0], [540, 425, 437, 440, 452, 1], [556, 425, 425, 437, 440, 0],
    [572, 425, 425, 459, 461, 1], [588, 430, 454, 461, 461, 1], [604, 452, 457, 510, 518, 1],
    [620, 425, 428, 512, 512, 0], [636, 428, 428, 476, 487, 1], [652, 425, 447, 478, 494, 0],
    [668, 440, 445, 474, 491, 1], [684, 478, 478, 489, 516, 1], [700, 440, 476, 489, 489, 0],
    [716, 452, 466, 478, 495, 0], [732, 454, 461, 476, 476, 0], [748, 430, 464, 495, 495, 1],
    [764, 404, 406, 493, 513, 0], [780, 380, 387, 408, 408, 0], [796, 346, 389, 392, 412, 1],
    [812, 394, 394, 440, 449, 1], [828, 416, 423, 440, 452, 0], [844, 413, 421, 449, 449, 1],
    [860, 440, 449, 452, 484, 1], [876, 435, 454, 474, 484, 1], [892, 401, 401, 476, 484, 0],
    [908, 406, 406, 423, 423, 1], [924, 298, 305, 423, 426, 0], [940, 189, 206, 302, 311, 0],
    [956, 160, 206, 244, 262, 1], [972, 242, 244, 273, 286, 1], [988, 276, 278, 310, 318, 1],
    [1004, 310, 310, 404, 417, 1], [1020, 401, 404, 433, 459, 1], [1036, 433, 433, 500, 528, 1],
    [1052, 476, 502, 565, 571, 1], [1068, 507, 551, 563, 563, 0], [1084, 534, 551, 598, 610, 1],
    [1100, 533, 551, 599, 600, 0], [1116, 560, 560, 582, 590, 1], [1132, 572, 582, 594, 594, 1],
    [1148, 572, 584, 592, 612, 0], [1164, 584, 587, 611, 634, 1], [1180, 618, 618, 654, 672, 1],
    [1196, 638, 652, 652, 684, 0], [1212, 625, 654, 671, 682, 1], [1228, 657, 676, 678, 696, 1],
    [1244, 635, 678, 686, 696, 1], [1260, 669, 681, 689, 694, 0], [1276, 678, 681, 758, 774, 1],
    [1292, 707, 730, 753, 757, 0], [1308, 723, 723, 768, 768, 1], [1324, 732, 763, 765, 774, 1],
    [1340, 719, 765, 774, 778, 1], [1356, 678, 678, 770, 773, 0], [1372, 676, 681, 713, 717, 1],
    [1388, 665, 678, 730, 735, 0], [1404, 657, 678, 753, 757, 1], [1420, 678, 729, 756, 756, 0],
    [1436, 666, 676, 728, 730, 0], [1452, 659, 659, 671, 679, 0], [1468, 659, 662, 739, 757, 1],
    [1484, 691, 734, 741, 745, 1], [1500, 691, 698, 744, 766, 0], [1516, 682, 685, 718, 722, 0],
    [1532, 640, 677, 704, 712, 0], [1548, 632, 636, 672, 677, 0], [1564, 632, 636, 655, 665, 0],
    [1580, 602, 606, 648, 653, 0], [1596, 573, 599, 647, 656, 0], [1612, 530, 543, 587, 593, 0],
    [1628, 474, 477, 553, 558, 0], [1644, 425, 443, 488, 496, 0]
];
candles.forEach(function (c) {
    var mid = c[0] + 0.5;
    line(mid, c[1], mid, c[4] + 1, "#0f0");
    if (c[2] === c[3]) {
        line(c[0] - 5, c[2] + 0.5, c[0] + 6, c[2] + 0.5, "#0f0");
    } else {
        add("rect", { x: c[0] - 4.5, y: c[2] + 0.5, width: 10, height: c[3] - c[2], fill: c[5] ? "#fff" : "#000", stroke: "#0f0" });
    }
});
// cover what falls left of the plot
add("rect", { x: 195, y: TOP, width: 9, height: 660, fill: "#000" });

// deal arrows: x, direction, first y, last y, step
var deals = [
    [956, "d", 173], [844, "d", 443], [892, "u", 413], [1020, "u", 415], [1020, "u", 428],
    [1068, "d", 557], [1084, "u", 599], [1164, "d", 605], [1180, "u", 630],
    [1276, "u", 701], [1276, "u", 712, 757, 5], [1276, "u", 763],
    [1292, "d", 732], [1292, "u", 738],
    [1308, "d", 725], [1308, "d", 733, 750, 5],
    [1356, "d", 687, 701, 4], [1356, "u", 712, 768, 4],
    [1372, "u", 687], [1372, "u", 700], [1372, "d", 711],
    [1388, "d", 663], [1388, "u", 674, 680, 3], [1388, "d", 672, 690, 6], [1388, "u", 695, 703, 4],
    [1388, "d", 711], [1388, "u", 716, 728, 4], [1388, "u", 736], [1404, "d", 675],
    [1500, "d", 699], [1516, "d", 685], [1516, "u", 718], [1516, "u", 698], [1516, "d", 708], [1516, "d", 714],
    [1532, "d", 670], [1532, "u", 661, 644, -5], [1532, "u", 700, 678, -4], [1532, "u", 712],
    [1548, "u", 670, 642, -4], [1548, "d", 636],
    [1564, "u", 653, 635, -4],
    [1580, "u", 646, 636, -4], [1580, "u", 606], [1580, "d", 611, 628, 5],
    [1596, "d", 575], [1596, "u", 643, 615, -4], [1596, "d", 607], [1596, "u", 592, 577, -5], [1596, "u", 654],
    [1612, "u", 591, 565, -4], [1612, "d", 536, 548, 5], [1612, "u", 554],
    [1628, "u", 555, 541, -4], [1628, "d", 533, 537, 4], [1628, "u", 525, 517, -4], [1628, "u", 508, 500, -4],
    [1628, "u", 485, 478, -4],
    [1644, "u", 486, 481, -4], [1644, "u", 468, 456, -4], [1644, "d", 427, 443, 4]
];
// white outline first, colour on top of it
var shapes = {
    u: { d: "M0 -6h1l6 6v2h-3v3h-7v-3h-3v-2z", inner: "M0 -5h1l5 5v1h-3v3h-5v-3h-3v-1z", fill: "#0060b8" },
    d: { d: "M0 6h1l6 -6v-2h-3v-3h-7v3h-3v2z", inner: "M0 5h1l5 -5v-1h-3v-3h-5v3h-3v1z", fill: "#e8401c" }
};
function arrow(x, y, dir) {
    var at = "translate(" + x + "," + y + ")";
    add("path", { d: shapes[dir].d, fill: "#fff", transform: at });
    add("path", { d: shapes[dir].inner, fill: shapes[dir].fill, transform: at });
}
deals.forEach(function (d) {
    var end = d[3] || d[2], step = d[4] || 1;
    for (var y = d[2]; step > 0 ? y <= end : y >= end; y += step) arrow(d[0], y, d[1]);
});

// lines joining entry and exit
var RED = "#e8401c", BLUE = "#0060b8";
[
    [204, 617, 1020, 422, RED], [844, 450, 1020, 408, RED], [1068, 563, 1084, 590, RED], [1164, 611, 1180, 622, RED],
    [892, 405, 956, 180, BLUE], [1284, 707, 1308, 752, BLUE], [1280, 718, 1308, 740, BLUE], [1280, 750, 1300, 738, BLUE],
    [1356, 772, 1372, 695, RED], [1356, 720, 1372, 690, BLUE], [1372, 680, 1388, 700, BLUE], [1388, 670, 1404, 678, BLUE],
    [1388, 690, 1388, 734, RED], [1356, 695, 1356, 712, BLUE],
    [1516, 700, 1532, 660, BLUE], [1532, 640, 1580, 612, BLUE], [1532, 665, 1596, 590, BLUE], [1548, 630, 1596, 575, BLUE],
    [1532, 680, 1580, 630, BLUE], [1548, 660, 1580, 605, BLUE], [1548, 640, 1612, 560, BLUE], [1564, 640, 1612, 570, BLUE],
    [1564, 632, 1612, 555, BLUE], [1580, 608, 1612, 562, BLUE], [1580, 640, 1628, 540, BLUE], [1596, 610, 1628, 545, BLUE],
    [1596, 575, 1628, 500, BLUE], [1612, 560, 1628, 510, BLUE], [1612, 550, 1644, 450, BLUE], [1628, 480, 1644, 450, BLUE],
    [1564, 655, 1596, 580, BLUE], [1580, 620, 1612, 540, BLUE], [1532, 650, 1596, 600, BLUE], [1580, 600, 1612, 550, BLUE]
].forEach(function (l) {
    line(l[0], l[1], l[2], l[3], l[4], "4 3 2 3");
});
// the last minute is packed with closed deals
[[1629, 525], [1632, 510], [1635, 495], [1638, 480]].forEach(function (p) {
    add("path", { d: "M" + p[0] + " " + p[1] + "L1644 448", stroke: BLUE, "stroke-width": 4 });
});

// order captions, one for each level
[690, 693, 697, 700, 703, 708, 711, 714, 717].forEach(function (y, i) {
    label(213, y, "#2210805" + (421 - i * 7) + " buy 0.95");
});
[449, 452, 457, 461, 466, 470, 474].forEach(function (y) {
    label(213, y, "#2");
});

// frame and time axis
line(LEFT, TOP + 0.5, RIGHT + 1, TOP + 0.5, "#fff");
line(LEFT + 0.5, TOP, LEFT + 0.5, BOTTOM, "#fff");
line(RIGHT + 0.5, TOP, RIGHT + 0.5, BOTTOM + 1, "#fff");
line(LEFT, BOTTOM + 0.5, RIGHT + 1, BOTTOM + 0.5, "#fff");
["7 Jun 2018", "7 Jun 13:33", "7 Jun 13:41", "7 Jun 13:49", "7 Jun 13:57", "7 Jun 14:05", "7 Jun 14:13",
    "7 Jun 14:21", "7 Jun 14:29", "7 Jun 14:37", "7 Jun 14:45", "7 Jun 14:53"].forEach(function (text, i) {
    var at = LEFT + i * 128;
    line(at + 0.5, BOTTOM, at + 0.5, BOTTOM + 5, "#fff");
    label(at, 803, text);
});
add("path", { d: "M204 781l6 6h-6z", fill: GRID });
add("path", { d: "M1495 137h12l-6 6z", fill: GRID });

// current price
add("rect", { x: 1852, y: 435, width: 53, height: 14, fill: GRID });
label(1855, 447, "1.18273", "current-price");

// chart captions
add("rect", { x: 208, y: 141, width: 19, height: 15, fill: "#f4f4ff", stroke: "#8a7fb8" });
add("rect", { x: 209, y: 142, width: 17, height: 3, fill: "#6a5fd0" });
add("path", { d: "M210 148h6M210 151h6M210 154h6", stroke: "#e04040" });
add("path", { d: "M218 148h7M218 151h7M218 154h7", stroke: "#5060d0" });
add("rect", { x: 230, y: 142, width: 10, height: 14, rx: 2, fill: "#2040d8" });
add("rect", { x: 240, y: 142, width: 9, height: 14, rx: 2, fill: "#d83030" });
add("path", { d: "M235 141h9v5h-3v4h-3v-4h-3z", fill: "#aaa" });
label(257, 154, "EURUSD,M1");
["1.18262", "1.18278", "1.18251", "1.18273"].forEach(function (text, i) {
    label(331 + i * 50, 154, text);
});
label(1740, 155, "Open lock MT5");
var hat = add("svg", { x: 1827, y: 139, width: 20, height: 20, viewBox: "0 0 26 26" });
add("use", { href: "#i-expert" }, hat);
```
